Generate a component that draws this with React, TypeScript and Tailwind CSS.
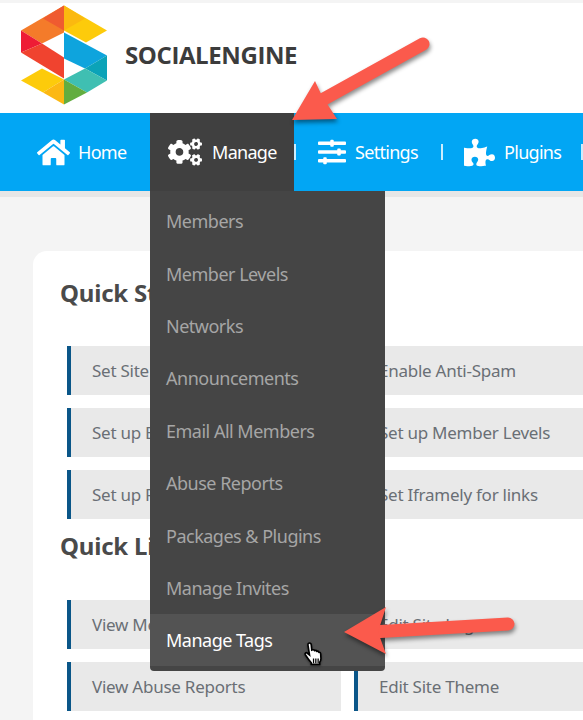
import React from 'react';
import { FaHome, FaCogs, FaSlidersH, FaPuzzlePiece } from 'react-icons/fa';

const menuItems = [
  'Members',
  'Member Levels',
  'Networks',
  'Announcements',
  'Email All Members',
  'Abuse Reports',
  'Packages & Plugins',
  'Manage Invites',
];

const quickStart = [
  ['Set Site Title', 'Enable Anti-Spam'],
  ['Set up Email', 'Set up Member Levels'],
  ['Set up Payment', 'Set Iframely for links'],
];

const quickLinks = [
  ['View Members', 'Edit Site Logo'],
  ['View Abuse Reports', 'Edit Site Theme'],
];

const Logo = () => (
  <svg width="88" height="100" viewBox="20 4.500 88 100" className="shrink-0">
    <polygon points="21,30 64,5 64,32 42,43" fill="#f47b2a" />
    <polygon points="43,18 64,5 64,30" fill="#ef5b30" />
    <polygon points="21,30 42,43 21,52" fill="#ee1c35" />
    <polygon points="21,52 42,43 64,57 64,78" fill="#f0432f" />
    <polygon points="64,5 107,30 86,42 64,30" fill="#fdcb0b" />
    <polygon points="64,5 85,18 64,30" fill="#fbb90f" />
    <polygon points="64,32 107,55 85,68 64,58" fill="#0ea4dd" />
    <polygon points="107,55 107,80 85,68" fill="#0ba3b8" />
    <polygon points="85,68 107,80 87,92 64,79" fill="#3fbfb2" />
    <polygon points="64,79 87,92 64,104" fill="#62ad3f" />
    <polygon points="21,80 42,68 64,79 43,92" fill="#fdcb0b" />
    <polygon points="43,92 64,79 64,104" fill="#fcb813" />
  </svg>
);

const ArrowTop = () => (
  <svg className="absolute left-[280px] top-[30px]" width="160" height="100" viewBox="280 30 160 100">
    <g style={{ filter: 'drop-shadow(1px 3px 2px rgba(0,0,0,0.45))' }}>
      <path d="M423 44 L322 100" stroke="#fb5a4c" strokeWidth="13" strokeLinecap="round" fill="none" />
      <polygon points="292,120 315,81 322,96 337,119" fill="#fb5a4c" />
    </g>
  </svg>
);

const ArrowBottom = () => (
  <svg className="absolute left-[330px] top-[600px]" width="200" height="70" viewBox="330 600 200 70">
    <g style={{ filter: 'drop-shadow(1px 3px 2px rgba(0,0,0,0.45))' }}>
      <path d="M508 624 L372 632" stroke="#fb5a4c" strokeWidth="13" strokeLinecap="round" fill="none" />
      <polygon points="344,632 386,607 378,632 386,654" fill="#fb5a4c" />
    </g>
  </svg>
);

const HandCursor = () => (
  <svg className="absolute left-[303px] top-[641px]" width="22" height="26" viewBox="0 0 24 28" style={{ filter: 'drop-shadow(0 1px 1px rgba(0,0,0,0.4))' }}>
    <path
      d="M6 2.5c1.2-1 2.8-.3 3 1.2l.6 6 1-.3c1-.2 1.800.2 2.100.9 1-.4 2-.1 2.400.800 1-.3 2 .1 2.300 1 1-.1 1.800.6 1.900 1.600l.3 5.300c0 1.500-.6 3-1.400 4.100v2.200h-9.200v-1.800c-2-2.200-4.600-5.800-6.500-8.700-.8-1.300.7-2.800 2-1.900l2.600 2.100-1.700-10.800c-.1-.7.100-1.300.6-1.700z"
      fill="#fff"
      stroke="#000"
      strokeWidth="1.800"
    />
    <path d="M11.500 19v5M14 19v5M16.500 19v5" stroke="#000" strokeWidth="1.400" />
  </svg>
);

const LinkRow = ({ left, right }: { left: string; right: string }) => (
  <div className="grid grid-cols-[274px_274px] gap-x-[13px]">
    {[left, right].map((label) => (
      <div
        key={label}
        className="h-[49px] bg-[#e9e9e9] border-l-4 border-[#0a5688] pl-[21px] flex items-center text-[17px] tracking-[-0.25px] text-[#6a6f75] whitespace-nowrap"
      >
        {label}
      </div>
    ))}
  </div>
);

const App = () => {
  return (
    <div className="relative w-[583px] h-[720px] overflow-hidden bg-[#f4f4f4] font-['Noto_Sans','Liberation_Sans',sans-serif]">
      {/* header */}
      <div className="mt-[3px] h-[110px] bg-white flex items-center pl-[20px] pb-[7px] gap-[17px]">
        <Logo />
        <span className="text-[24px] font-bold text-[#3c3c3c] tracking-[-0.4px] font-['Open_Sans','Liberation_Sans',sans-serif]">SOCIALENGINE</span>
      </div>

      {/* nav */}
      <div className="h-[78px] bg-[#02a6f4] flex items-center text-white text-[18px] tracking-[-0.7px] whitespace-nowrap">
        <div className="w-[150px] pl-[37px] flex items-center gap-[8px]">
          <FaHome className="text-[33px]" />
          <span>Home</span>
        </div>
        <div className="w-[144px] h-full bg-[#404040] pl-[18px] flex items-center gap-[10px]">
          <FaCogs className="text-[34px]" />
          <span>Manage</span>
        </div>
        <span className="w-[2px] h-[16px] bg-white/80" />
        <div className="w-[145px] pl-[22px] flex items-center gap-[9px]">
          <FaSlidersH className="text-[28px]" />
          <span>Settings</span>
        </div>
        <span className="w-[2px] h-[16px] bg-white/80" />
        <div className="w-[138px] pl-[21px] flex items-center gap-[9px]">
          <FaPuzzlePiece className="text-[31px]" />
          <span>Plugins</span>
        </div>
        <span className="w-[2px] h-[16px] bg-white/80" />
      </div>
      <div className="h-[6px] bg-[#e6e6e6]" />

      {/* content card */}
      <div className="ml-[33px] mt-[54px] w-[600px] h-[520px] bg-white rounded-tl-[14px] pl-[27px] pt-[26px]">
        <h2 className="text-[24px] leading-[32px] font-bold tracking-[-0.2px] text-[#4a4a4a]">Quick Start</h2>
        <div className="mt-[37px] ml-[7px] flex flex-col gap-[13px]">
          {quickStart.map(([l, r]) => (
            <LinkRow key={l} left={l} right={r} />
          ))}
        </div>
        <h2 className="mt-[11px] text-[24px] leading-[32px] font-bold tracking-[-0.2px] text-[#4a4a4a]">Quick Links</h2>
        <div className="mt-[38px] ml-[7px] flex flex-col gap-[13px]">
          {quickLinks.map(([l, r]) => (
            <LinkRow key={l} left={l} right={r} />
          ))}
        </div>
      </div>

      {/* dropdown */}
      <div className="absolute left-[150px] top-[191px] w-[235px] h-[480px] bg-[#454545] rounded-b-[4px] text-[18px] tracking-[-0.5px] pb-[5px] flex flex-col justify-end">
        {menuItems.map((item) => (
          <div key={item} className="h-[52.400px] pl-[16px] pt-[2px] flex items-center text-[#a6a6a6] whitespace-nowrap">
            {item}
          </div>
        ))}
        <div className="h-[52.400px] pl-[16px] pt-[2px] flex items-center text-white bg-[#535353]">Manage Tags</div>
      </div>

      <ArrowTop />
      <ArrowBottom />
      <HandCursor />
    </div>
  );
};

export default App;
